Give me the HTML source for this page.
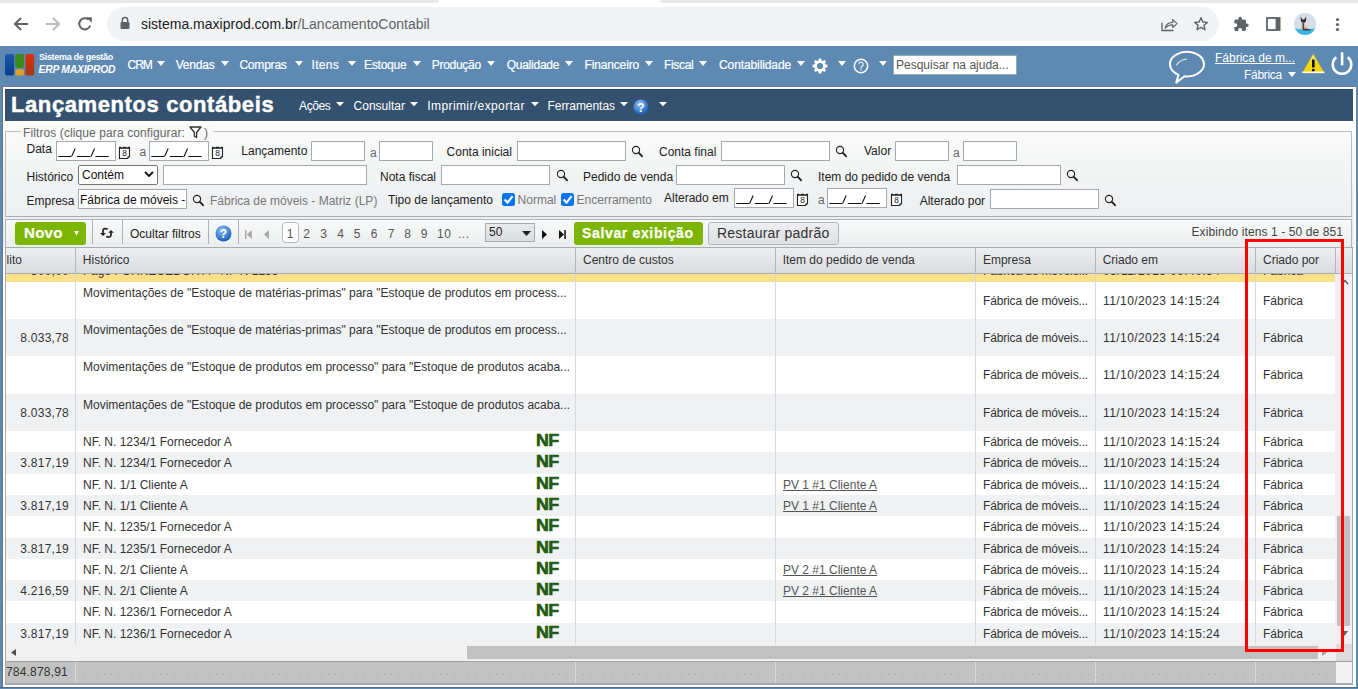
<!DOCTYPE html>
<html><head><meta charset="utf-8"><title>Lançamentos contábeis</title>
<style>
html,body{margin:0;padding:0;}
body{width:1358px;height:689px;overflow:hidden;position:relative;font-family:'Liberation Sans', sans-serif;background:#fff;}
.r{position:absolute;}
.t{position:absolute;white-space:nowrap;line-height:1;}
svg.r{overflow:visible}
</style></head><body>
<div class="r" style="left:0px;top:0px;width:1358px;height:46px;background:#fff"></div>
<div class="r" style="left:0px;top:0px;width:439px;height:3px;background:#e6e8eb;border-bottom-right-radius:4px"></div>
<div class="r" style="left:660px;top:0px;width:698px;height:3px;background:#e6e8eb;border-bottom-left-radius:4px"></div>
<div class="r" style="left:107px;top:7px;width:1112px;height:34px;background:#f1f3f4;border-radius:17px"></div>
<svg class="r" style="left:13px;top:16px" width="16" height="16" viewBox="0 0 16 16"><path d="M15 8H2.5M8 2L2 8l6 6" stroke="#5f6368" stroke-width="2" fill="none"/></svg>
<svg class="r" style="left:45px;top:16px" width="16" height="16" viewBox="0 0 16 16"><path d="M1 8h12.5M8 2l6 6-6 6" stroke="#b9bbbe" stroke-width="2" fill="none"/></svg>
<svg class="r" style="left:77px;top:16px" width="16" height="16" viewBox="0 0 16 16"><path d="M13.2 9.5A5.6 5.6 0 1 1 11.6 3.6" stroke="#5f6368" stroke-width="2" fill="none"/><path d="M9.2 1.2h5.6v5.6z" fill="#5f6368"/></svg>
<svg class="r" style="left:120px;top:16px" width="10" height="14" viewBox="0 0 10 14"><path d="M2.3 6V4.2a2.7 2.7 0 0 1 5.4 0V6" stroke="#5f6368" stroke-width="1.5" fill="none"/><rect x="0.5" y="6" width="9" height="7" rx="1" fill="#5f6368"/></svg>
<div class="t" style="left:141px;top:16.95px;font-size:14px;color:#202124">sistema.maxiprod.com.br<span style="color:#5f6368">/LancamentoContabil</span></div>
<svg class="r" style="left:1161px;top:16px" width="17" height="16" viewBox="0 0 17 16"><path d="M1 6.5V14.5H12.5" stroke="#5f6368" stroke-width="1.3" fill="none"/><path d="M4.2 12.2C5 8.5 8 6.3 11.8 6.3V3.6L16 7.6 11.8 11.6V8.8C8.6 8.8 6.2 9.8 4.2 12.2Z" stroke="#5f6368" stroke-width="1.2" fill="none" stroke-linejoin="round"/></svg>
<svg class="r" style="left:1193px;top:16px" width="16" height="16" viewBox="0 0 16 16"><path d="M8 1.8l1.85 4.15 4.5.4-3.4 2.95 1.05 4.45L8 11.4l-4 2.35 1.05-4.45-3.4-2.95 4.5-.4z" stroke="#5f6368" stroke-width="1.4" fill="none" stroke-linejoin="round"/></svg>
<svg class="r" style="left:1233px;top:16px" width="16" height="16" viewBox="0 0 16 16"><path transform="scale(0.68)" d="M20.5 11H19V7c0-1.1-.9-2-2-2h-4V3.5C13 2.12 11.88 1 10.5 1S8 2.12 8 3.5V5H4c-1.1 0-1.99.9-1.99 2v3.8H3.5c1.49 0 2.7 1.21 2.7 2.7s-1.21 2.7-2.7 2.7H2V20c0 1.1.9 2 2 2h3.8v-1.5c0-1.490 1.21-2.7 2.7-2.7 1.49 0 2.7 1.21 2.7 2.7V22H17c1.1 0 2-.9 2-2v-4h1.5c1.38 0 2.5-1.12 2.5-2.5S21.880 11 20.5 11z" fill="#5f6368"/></svg>
<svg class="r" style="left:1266px;top:17px" width="15" height="14" viewBox="0 0 15 14"><rect x="1" y="1" width="12.6" height="12" stroke="#5f6368" stroke-width="1.8" fill="none"/><rect x="9.6" y="1" width="4" height="12" fill="#5f6368"/></svg>
<svg class="r" style="left:1294px;top:13px" width="22" height="22" viewBox="0 0 22 22"><defs><clipPath id="av"><circle cx="11" cy="11" r="11"/></clipPath></defs><g clip-path="url(#av)"><rect width="22" height="22" fill="#d2deea"/><path d="M0 15.5Q11 17 22 15.5V22H0z" fill="#3db6e6"/><path d="M6.5 3.5L8.3 6.5H10.3L12.2 3.5L12 8.5L10.5 10.5L10.8 13L13.5 14.5L15.5 17H7.5L8 12.5L7.2 9.5Z" fill="#d9b38a"/><path d="M6.5 3.5L8.3 6.5H10.3L12.2 3.5L12 8L10.8 9.5H8L7 8Z" fill="#2a2a2a"/><rect x="8.6" y="10" width="1.4" height="7" fill="#55443a"/><path d="M10 15.5L17 16.5L16 17.5H9z" fill="#2a3a55"/></g></svg>
<svg class="r" style="left:1335px;top:16px" width="5" height="16" viewBox="0 0 5 16"><circle cx="2.5" cy="3.5" r="1.6" fill="#5f6368"/><circle cx="2.5" cy="8.5" r="1.6" fill="#5f6368"/><circle cx="2.5" cy="13.5" r="1.6" fill="#5f6368"/></svg>
<div class="r" style="left:0px;top:46px;width:1358px;height:643px;background:#5d89b3"></div>
<svg class="r" style="left:5px;top:54px" width="30" height="22" viewBox="0 0 30 22"><defs><linearGradient id="lb" x1="0" y1="0" x2="0" y2="1"><stop offset="0" stop-color="#1c5aaa"/><stop offset="1" stop-color="#0b3c8c"/></linearGradient><linearGradient id="lr" x1="0" y1="0" x2="0" y2="1"><stop offset="0" stop-color="#d8300c"/><stop offset="1" stop-color="#a8380c"/></linearGradient></defs><rect x="0" y="0" width="9.2" height="21.6" rx="2" fill="url(#lb)"/><rect x="10.2" y="0" width="8.8" height="14" rx="2" fill="#3a8a1c"/><rect x="10.2" y="15.2" width="8.8" height="6.4" rx="2" fill="#e2a028"/><rect x="20.4" y="0" width="8.8" height="21.6" rx="2" fill="url(#lr)"/></svg>
<div class="t " style="left:39px;top:53.38px;font-size:9px;color:#fff;font-weight:700;letter-spacing:-0.3px">Sistema de gestão</div>
<div class="t " style="left:38.5px;top:64.98px;font-size:10.3px;color:#fff;font-weight:700;font-style:italic;letter-spacing:-0.2px">ERP MAXIPROD</div>
<div class="t " style="left:127.5px;top:58.84px;font-size:12px;color:#fff;font-weight:400;letter-spacing:-1.0px;-webkit-text-stroke:0.2px #fff">CRM</div>
<svg class="r" style="left:157px;top:61px" width="8" height="5" viewBox="0 0 8 5"><path d="M0 0H8L4.0 5Z" fill="#fff"/></svg>
<div class="t " style="left:175.7px;top:58.84px;font-size:12px;color:#fff;font-weight:400;letter-spacing:-0.2px;-webkit-text-stroke:0.2px #fff">Vendas</div>
<svg class="r" style="left:220.5px;top:61px" width="8" height="5" viewBox="0 0 8 5"><path d="M0 0H8L4.0 5Z" fill="#fff"/></svg>
<div class="t " style="left:239.4px;top:58.84px;font-size:12px;color:#fff;font-weight:400;letter-spacing:-0.2px;-webkit-text-stroke:0.2px #fff">Compras</div>
<svg class="r" style="left:295px;top:61px" width="8" height="5" viewBox="0 0 8 5"><path d="M0 0H8L4.0 5Z" fill="#fff"/></svg>
<div class="t " style="left:311.5px;top:58.84px;font-size:12px;color:#fff;font-weight:400;letter-spacing:0.3px;-webkit-text-stroke:0.2px #fff">Itens</div>
<svg class="r" style="left:348px;top:61px" width="8" height="5" viewBox="0 0 8 5"><path d="M0 0H8L4.0 5Z" fill="#fff"/></svg>
<div class="t " style="left:363.9px;top:58.84px;font-size:12px;color:#fff;font-weight:400;letter-spacing:-0.2px;-webkit-text-stroke:0.2px #fff">Estoque</div>
<svg class="r" style="left:413px;top:61px" width="8" height="5" viewBox="0 0 8 5"><path d="M0 0H8L4.0 5Z" fill="#fff"/></svg>
<div class="t " style="left:431.8px;top:58.84px;font-size:12px;color:#fff;font-weight:400;letter-spacing:-0.3px;-webkit-text-stroke:0.2px #fff">Produção</div>
<svg class="r" style="left:487px;top:61px" width="8" height="5" viewBox="0 0 8 5"><path d="M0 0H8L4.0 5Z" fill="#fff"/></svg>
<div class="t " style="left:506.7px;top:58.84px;font-size:12px;color:#fff;font-weight:400;letter-spacing:-0.25px;-webkit-text-stroke:0.2px #fff">Qualidade</div>
<svg class="r" style="left:565px;top:61px" width="8" height="5" viewBox="0 0 8 5"><path d="M0 0H8L4.0 5Z" fill="#fff"/></svg>
<div class="t " style="left:584.5px;top:58.84px;font-size:12px;color:#fff;font-weight:400;letter-spacing:-0.15px;-webkit-text-stroke:0.2px #fff">Financeiro</div>
<svg class="r" style="left:645px;top:61px" width="8" height="5" viewBox="0 0 8 5"><path d="M0 0H8L4.0 5Z" fill="#fff"/></svg>
<div class="t " style="left:663.9px;top:58.84px;font-size:12px;color:#fff;font-weight:400;letter-spacing:-0.3px;-webkit-text-stroke:0.2px #fff">Fiscal</div>
<svg class="r" style="left:699px;top:61px" width="8" height="5" viewBox="0 0 8 5"><path d="M0 0H8L4.0 5Z" fill="#fff"/></svg>
<div class="t " style="left:719px;top:58.84px;font-size:12px;color:#fff;font-weight:400;letter-spacing:-0.1px;-webkit-text-stroke:0.2px #fff">Contabilidade</div>
<svg class="r" style="left:797px;top:61px" width="8" height="5" viewBox="0 0 8 5"><path d="M0 0H8L4.0 5Z" fill="#fff"/></svg>
<svg class="r" style="left:812px;top:58px" width="16" height="16" viewBox="0 0 16 16"><g fill="#fff"><circle cx="8" cy="8" r="5.6"/><path d="M6.8 0.6H9.2L9.9 4H6.1Z" transform="rotate(0 8 8)"/><path d="M6.8 0.6H9.2L9.9 4H6.1Z" transform="rotate(45 8 8)"/><path d="M6.8 0.6H9.2L9.9 4H6.1Z" transform="rotate(90 8 8)"/><path d="M6.8 0.6H9.2L9.9 4H6.1Z" transform="rotate(135 8 8)"/><path d="M6.8 0.6H9.2L9.9 4H6.1Z" transform="rotate(180 8 8)"/><path d="M6.8 0.6H9.2L9.9 4H6.1Z" transform="rotate(225 8 8)"/><path d="M6.8 0.6H9.2L9.9 4H6.1Z" transform="rotate(270 8 8)"/><path d="M6.8 0.6H9.2L9.9 4H6.1Z" transform="rotate(315 8 8)"/></g><circle cx="8" cy="8" r="3.1" fill="#5d89b3"/></svg>
<svg class="r" style="left:838px;top:61px" width="8" height="5" viewBox="0 0 8 5"><path d="M0 0H8L4.0 5Z" fill="#fff"/></svg>
<svg class="r" style="left:853px;top:58px" width="16" height="16" viewBox="0 0 16 16"><circle cx="8" cy="8" r="6.7" stroke="#fff" stroke-width="1.5" fill="none"/><path d="M5.8 6.2a2.2 2.2 0 1 1 3.2 2c-.7.4-1 .8-1 1.6v.6" stroke="#fff" stroke-width="1.1" fill="none"/><rect x="7.4" y="11.3" width="1.2" height="1.2" fill="#fff"/></svg>
<svg class="r" style="left:879px;top:61px" width="8" height="5" viewBox="0 0 8 5"><path d="M0 0H8L4.0 5Z" fill="#fff"/></svg>
<div class="r" style="left:893px;top:55px;width:124px;height:20px;background:#fff;border:1px solid #9aa;box-sizing:border-box"></div>
<div class="t " style="left:896px;top:58.84px;font-size:12px;color:#555;font-weight:400;">Pesquisar na ajuda...</div>
<svg class="r" style="left:1169px;top:51px" width="38" height="34" viewBox="0 0 38 34"><path d="M9.5 23.8A17 12.3 0 1 1 15.5 25.3L7.2 31.6Z" stroke="#fff" stroke-width="2" fill="none" stroke-linejoin="round"/><path d="M7.5 14.5C9 11 13 8.5 18 8" stroke="#e8eef5" stroke-width="1.1" fill="none"/></svg>
<div class="t " style="left:1215px;top:51.84px;font-size:12px;color:#fff;font-weight:400;text-decoration:underline">Fábrica de m...</div>
<div class="t " style="left:1244px;top:68.84px;font-size:12px;color:#fff;font-weight:400;letter-spacing:-0.3px">Fábrica</div>
<svg class="r" style="left:1288px;top:72px" width="8" height="5" viewBox="0 0 8 5"><path d="M0 0H8L4.0 5Z" fill="#fff"/></svg>
<svg class="r" style="left:1301px;top:52px" width="25" height="23" viewBox="0 0 25 23"><defs><linearGradient id="wg" x1="0" y1="0" x2="0" y2="1"><stop offset="0" stop-color="#f7e9a0"/><stop offset="0.45" stop-color="#f2dc10"/><stop offset="1" stop-color="#eed600"/></linearGradient></defs><path d="M12.2 1.2L23.8 21.2H0.8z" fill="url(#wg)" stroke="#8c8c80" stroke-width="1" stroke-linejoin="round"/><rect x="11" y="7.5" width="2.6" height="8" fill="#111"/><rect x="11" y="17" width="2.6" height="2.5" fill="#111"/><rect x="1" y="19.5" width="22.5" height="1.6" fill="#f4f4f0"/></svg>
<svg class="r" style="left:1331px;top:52px" width="23" height="24" viewBox="0 0 23 24"><path d="M5.3 5.2A9.3 9.3 0 1 0 16.7 5.2" stroke="#fff" stroke-width="2.5" fill="none"/><path d="M11.1 1.2v11" stroke="#fff" stroke-width="2.6" stroke-linecap="round"/></svg>
<div class="r" style="left:2px;top:86px;width:1354px;height:601px;background:#fff;border-top:1px solid #7a7a7a;border-left:1px solid #6a7480;box-sizing:border-box"></div>
<div class="r" style="left:5px;top:89px;width:1348px;height:32px;background:#34516f;border-top:1px solid #244568;box-sizing:border-box"></div>
<div class="t " style="left:11px;top:93.58px;font-size:22px;color:#fff;font-weight:700;letter-spacing:0.6px;-webkit-text-stroke:0.45px #fff">Lançamentos contábeis</div>
<div class="t " style="left:299.1px;top:99.84px;font-size:12px;color:#fff;font-weight:400;letter-spacing:-0.4px">Ações</div>
<svg class="r" style="left:336px;top:102px" width="8" height="4.2" viewBox="0 0 8 4.2"><path d="M0 0H8L4.0 4.2Z" fill="#fff"/></svg>
<div class="t " style="left:353.6px;top:99.84px;font-size:12px;color:#fff;font-weight:400;letter-spacing:0px">Consultar</div>
<svg class="r" style="left:410px;top:102px" width="8" height="4.2" viewBox="0 0 8 4.2"><path d="M0 0H8L4.0 4.2Z" fill="#fff"/></svg>
<div class="t " style="left:427.3px;top:99.84px;font-size:12px;color:#fff;font-weight:400;letter-spacing:0.4px">Imprimir/exportar</div>
<svg class="r" style="left:531px;top:102px" width="8" height="4.2" viewBox="0 0 8 4.2"><path d="M0 0H8L4.0 4.2Z" fill="#fff"/></svg>
<div class="t " style="left:547.5px;top:99.84px;font-size:12px;color:#fff;font-weight:400;letter-spacing:-0.05px">Ferramentas</div>
<svg class="r" style="left:620px;top:102px" width="8" height="4.2" viewBox="0 0 8 4.2"><path d="M0 0H8L4.0 4.2Z" fill="#fff"/></svg>
<svg class="r" style="left:633px;top:99px" width="16" height="16" viewBox="0 0 16 16"><defs><radialGradient id="hg" cx="40%" cy="30%" r="70%"><stop offset="0" stop-color="#8ec0f5"/><stop offset="1" stop-color="#1c5fb8"/></radialGradient></defs><circle cx="8" cy="8" r="7.5" fill="url(#hg)"/><text x="8" y="12.5" font-size="12" font-family="Liberation Sans" font-weight="700" fill="#fff" text-anchor="middle">?</text></svg>
<svg class="r" style="left:659px;top:101.5px" width="8" height="4.2" viewBox="0 0 8 4.2"><path d="M0 0H8L4.0 4.2Z" fill="#fff"/></svg>
<div class="r" style="left:3px;top:121px;width:1351px;height:127px;background:linear-gradient(#fdfdfd 0px,#f6f7f7 30px,#eceef0 96px,#eceef0 100%)"></div>
<div class="r" style="left:5px;top:131px;width:1347px;height:86px;border:1px solid #b8bec6;border-bottom-color:#a9aeb4;box-sizing:border-box"></div>
<div class="r" style="left:21px;top:126px;width:192px;height:12px;background:#f8f9f9"></div>
<div class="t " style="left:23px;top:127.14px;font-size:12px;color:#666;font-weight:400;letter-spacing:0.1px">Filtros (clique para configurar:</div>
<svg class="r" style="left:189px;top:126px" width="13" height="12" viewBox="0 0 13 12"><path d="M1 1h11L7.6 6.5V11.5L5.4 10.5V6.5z" stroke="#333" stroke-width="1.3" fill="none" stroke-linejoin="round"/></svg>
<div class="t " style="left:204px;top:127.14px;font-size:12px;color:#666;font-weight:400;">)</div>
<div class="t " style="left:26.5px;top:142.84px;font-size:12px;color:#222;font-weight:400;">Data</div>
<div class="r" style="left:56px;top:141px;width:60px;height:20px;background:#fff;border:1px solid #a5a9ae;box-sizing:border-box"></div>
<svg class="r" style="left:56px;top:142px" width="60" height="19" viewBox="0 0 60 19"><path d="M2.3 14.5H15.3M20.9 14.5H34.5M39.4 14.5H52.7" stroke="#111" stroke-width="1"/><path d="M15.6 14.5L19.2 6.5M35 14.5L38.6 6.5" stroke="#111" stroke-width="1.1"/></svg>
<svg class="r" style="left:118px;top:145px" width="13" height="14" viewBox="0 0 13 14"><path d="M1.5 2.5h10v9l-2 2h-8z" stroke="#222" stroke-width="1.1" fill="#fff"/><rect x="1" y="1.8" width="11" height="2" fill="#222"/><circle cx="4" cy="1.6" r="0.9" fill="#fff"/><circle cx="9" cy="1.6" r="0.9" fill="#fff"/><path d="M9.5 13.5l2-2h-2z" fill="#222"/><text x="6.5" y="11.3" font-size="8.5" font-family="Liberation Mono" fill="#222" text-anchor="middle">8</text></svg>
<div class="t " style="left:139.5px;top:145.84px;font-size:12px;color:#666;font-weight:400;">a</div>
<div class="r" style="left:149px;top:141px;width:60px;height:20px;background:#fff;border:1px solid #a5a9ae;box-sizing:border-box"></div>
<svg class="r" style="left:149px;top:142px" width="60" height="19" viewBox="0 0 60 19"><path d="M2.3 14.5H15.3M20.9 14.5H34.5M39.4 14.5H52.7" stroke="#111" stroke-width="1"/><path d="M15.6 14.5L19.2 6.5M35 14.5L38.6 6.5" stroke="#111" stroke-width="1.1"/></svg>
<svg class="r" style="left:211px;top:145px" width="13" height="14" viewBox="0 0 13 14"><path d="M1.5 2.5h10v9l-2 2h-8z" stroke="#222" stroke-width="1.1" fill="#fff"/><rect x="1" y="1.8" width="11" height="2" fill="#222"/><circle cx="4" cy="1.6" r="0.9" fill="#fff"/><circle cx="9" cy="1.6" r="0.9" fill="#fff"/><path d="M9.5 13.5l2-2h-2z" fill="#222"/><text x="6.5" y="11.3" font-size="8.5" font-family="Liberation Mono" fill="#222" text-anchor="middle">8</text></svg>
<div class="t " style="left:241.3px;top:145.34px;font-size:12px;color:#222;font-weight:400;">Lançamento</div>
<div class="r" style="left:311px;top:141px;width:54px;height:20px;background:#fff;border:1px solid #a5a9ae;box-sizing:border-box"></div>
<div class="t " style="left:370px;top:146.84px;font-size:12px;color:#666;font-weight:400;">a</div>
<div class="r" style="left:379px;top:141px;width:54px;height:20px;background:#fff;border:1px solid #a5a9ae;box-sizing:border-box"></div>
<div class="t " style="left:446.6px;top:145.84px;font-size:12px;color:#222;font-weight:400;">Conta inicial</div>
<div class="r" style="left:517px;top:141px;width:109px;height:20px;background:#fff;border:1px solid #a5a9ae;box-sizing:border-box"></div>
<svg class="r" style="left:631px;top:145px" width="13" height="13" viewBox="0 0 13 13"><circle cx="5" cy="5" r="3.6" stroke="#222" stroke-width="1.15" fill="none"/><path d="M7.8 7.8l3.2 3.4" stroke="#222" stroke-width="1.9" stroke-linecap="round"/></svg>
<div class="t " style="left:659px;top:145.84px;font-size:12px;color:#222;font-weight:400;">Conta final</div>
<div class="r" style="left:721px;top:141px;width:109px;height:20px;background:#fff;border:1px solid #a5a9ae;box-sizing:border-box"></div>
<svg class="r" style="left:835px;top:145px" width="13" height="13" viewBox="0 0 13 13"><circle cx="5" cy="5" r="3.6" stroke="#222" stroke-width="1.15" fill="none"/><path d="M7.8 7.8l3.2 3.4" stroke="#222" stroke-width="1.9" stroke-linecap="round"/></svg>
<div class="t " style="left:864px;top:144.84px;font-size:12px;color:#222;font-weight:400;">Valor</div>
<div class="r" style="left:895px;top:141px;width:54px;height:20px;background:#fff;border:1px solid #a5a9ae;box-sizing:border-box"></div>
<div class="t " style="left:953px;top:146.84px;font-size:12px;color:#666;font-weight:400;">a</div>
<div class="r" style="left:963px;top:141px;width:54px;height:20px;background:#fff;border:1px solid #a5a9ae;box-sizing:border-box"></div>
<div class="t " style="left:26.5px;top:170.84px;font-size:12px;color:#222;font-weight:400;">Histórico</div>
<div class="r" style="left:78px;top:165px;width:80px;height:20px;background:#fff;border:1px solid #767676;border-radius:2px;box-sizing:border-box"></div>
<div class="t " style="left:82px;top:169.34px;font-size:12px;color:#111;font-weight:400;">Contém</div>
<svg class="r" style="left:144px;top:171px" width="10" height="7" viewBox="0 0 10 7"><path d="M1 1l4 4 4-4" stroke="#111" stroke-width="1.8" fill="none"/></svg>
<div class="r" style="left:163px;top:165px;width:204px;height:20px;background:#fff;border:1px solid #a5a9ae;box-sizing:border-box"></div>
<div class="t " style="left:380px;top:170.84px;font-size:12px;color:#222;font-weight:400;">Nota fiscal</div>
<div class="r" style="left:441px;top:165px;width:109px;height:20px;background:#fff;border:1px solid #a5a9ae;box-sizing:border-box"></div>
<svg class="r" style="left:556px;top:169px" width="13" height="13" viewBox="0 0 13 13"><circle cx="5" cy="5" r="3.6" stroke="#222" stroke-width="1.15" fill="none"/><path d="M7.8 7.8l3.2 3.4" stroke="#222" stroke-width="1.9" stroke-linecap="round"/></svg>
<div class="t " style="left:583px;top:170.84px;font-size:12px;color:#222;font-weight:400;">Pedido de venda</div>
<div class="r" style="left:676px;top:165px;width:109px;height:20px;background:#fff;border:1px solid #a5a9ae;box-sizing:border-box"></div>
<svg class="r" style="left:790px;top:169px" width="13" height="13" viewBox="0 0 13 13"><circle cx="5" cy="5" r="3.6" stroke="#222" stroke-width="1.15" fill="none"/><path d="M7.8 7.8l3.2 3.4" stroke="#222" stroke-width="1.9" stroke-linecap="round"/></svg>
<div class="t " style="left:818px;top:170.84px;font-size:12px;color:#222;font-weight:400;">Item do pedido de venda</div>
<div class="r" style="left:957px;top:165px;width:104px;height:20px;background:#fff;border:1px solid #a5a9ae;box-sizing:border-box"></div>
<svg class="r" style="left:1066px;top:169px" width="13" height="13" viewBox="0 0 13 13"><circle cx="5" cy="5" r="3.6" stroke="#222" stroke-width="1.15" fill="none"/><path d="M7.8 7.8l3.2 3.4" stroke="#222" stroke-width="1.9" stroke-linecap="round"/></svg>
<div class="t " style="left:26.5px;top:195.14px;font-size:12px;color:#222;font-weight:400;">Empresa</div>
<div class="r" style="left:78px;top:189px;width:109px;height:20px;background:#fff;border:1px solid #a5a9ae;box-sizing:border-box"></div>
<div class="t " style="left:80px;top:193.54px;font-size:12px;color:#111;font-weight:400;">Fábrica de móveis -</div>
<svg class="r" style="left:192px;top:194px" width="13" height="13" viewBox="0 0 13 13"><circle cx="5" cy="5" r="3.6" stroke="#222" stroke-width="1.15" fill="none"/><path d="M7.8 7.8l3.2 3.4" stroke="#222" stroke-width="1.9" stroke-linecap="round"/></svg>
<div class="t " style="left:210px;top:194.84px;font-size:12px;color:#777;font-weight:400;">Fábrica de móveis - Matriz (LP)</div>
<div class="t " style="left:388px;top:193.84px;font-size:12px;color:#222;font-weight:400;">Tipo de lançamento</div>
<svg class="r" style="left:502px;top:193px" width="13" height="13" viewBox="0 0 13 13"><rect x="0" y="0" width="13" height="13" rx="2.5" fill="#0a75f0"/><path d="M2.6 6.6l2.9 3L10.6 3.2" stroke="#fff" stroke-width="2.1" fill="none"/></svg>
<div class="t " style="left:517.6px;top:193.84px;font-size:12px;color:#777;font-weight:400;">Normal</div>
<svg class="r" style="left:561px;top:193px" width="13" height="13" viewBox="0 0 13 13"><rect x="0" y="0" width="13" height="13" rx="2.5" fill="#0a75f0"/><path d="M2.6 6.6l2.9 3L10.6 3.2" stroke="#fff" stroke-width="2.1" fill="none"/></svg>
<div class="t " style="left:576.6px;top:193.84px;font-size:12px;color:#777;font-weight:400;">Encerramento</div>
<div class="t " style="left:664px;top:191.84px;font-size:12px;color:#222;font-weight:400;">Alterado em</div>
<div class="r" style="left:734px;top:188px;width:60px;height:20px;background:#fff;border:1px solid #a5a9ae;box-sizing:border-box"></div>
<svg class="r" style="left:734px;top:189px" width="60" height="19" viewBox="0 0 60 19"><path d="M2.3 14.5H15.3M20.9 14.5H34.5M39.4 14.5H52.7" stroke="#111" stroke-width="1"/><path d="M15.6 14.5L19.2 6.5M35 14.5L38.6 6.5" stroke="#111" stroke-width="1.1"/></svg>
<svg class="r" style="left:796px;top:192px" width="13" height="14" viewBox="0 0 13 14"><path d="M1.5 2.5h10v9l-2 2h-8z" stroke="#222" stroke-width="1.1" fill="#fff"/><rect x="1" y="1.8" width="11" height="2" fill="#222"/><circle cx="4" cy="1.6" r="0.9" fill="#fff"/><circle cx="9" cy="1.6" r="0.9" fill="#fff"/><path d="M9.5 13.5l2-2h-2z" fill="#222"/><text x="6.5" y="11.3" font-size="8.5" font-family="Liberation Mono" fill="#222" text-anchor="middle">8</text></svg>
<div class="t " style="left:818px;top:193.84px;font-size:12px;color:#666;font-weight:400;">a</div>
<div class="r" style="left:827px;top:188px;width:60px;height:20px;background:#fff;border:1px solid #a5a9ae;box-sizing:border-box"></div>
<svg class="r" style="left:827px;top:189px" width="60" height="19" viewBox="0 0 60 19"><path d="M2.3 14.5H15.3M20.9 14.5H34.5M39.4 14.5H52.7" stroke="#111" stroke-width="1"/><path d="M15.6 14.5L19.2 6.5M35 14.5L38.6 6.5" stroke="#111" stroke-width="1.1"/></svg>
<svg class="r" style="left:890px;top:192px" width="13" height="14" viewBox="0 0 13 14"><path d="M1.5 2.5h10v9l-2 2h-8z" stroke="#222" stroke-width="1.1" fill="#fff"/><rect x="1" y="1.8" width="11" height="2" fill="#222"/><circle cx="4" cy="1.6" r="0.9" fill="#fff"/><circle cx="9" cy="1.6" r="0.9" fill="#fff"/><path d="M9.5 13.5l2-2h-2z" fill="#222"/><text x="6.5" y="11.3" font-size="8.5" font-family="Liberation Mono" fill="#222" text-anchor="middle">8</text></svg>
<div class="t " style="left:919.7px;top:194.84px;font-size:12px;color:#222;font-weight:400;">Alterado por</div>
<div class="r" style="left:990px;top:189px;width:109px;height:20px;background:#fff;border:1px solid #a5a9ae;box-sizing:border-box"></div>
<svg class="r" style="left:1104px;top:194px" width="13" height="13" viewBox="0 0 13 13"><circle cx="5" cy="5" r="3.6" stroke="#222" stroke-width="1.15" fill="none"/><path d="M7.8 7.8l3.2 3.4" stroke="#222" stroke-width="1.9" stroke-linecap="round"/></svg>
<div class="r" style="left:5px;top:219px;width:1347px;height:29px;background:linear-gradient(#f8f9f9,#ebeced);border:1px solid #b1b6bc;border-bottom:none;box-sizing:border-box"></div>
<div class="r" style="left:15px;top:222px;width:71px;height:23px;background:#7cb600;border-radius:3px"></div>
<div class="t " style="left:24px;top:225.30px;font-size:15px;color:#fff;font-weight:700;letter-spacing:0.3px;-webkit-text-stroke:0.2px #fff">Novo</div>
<svg class="r" style="left:74px;top:231px" width="5" height="5" viewBox="0 0 5 5"><path d="M0 0h5L2.5 4.5z" fill="#fff"/></svg>
<div class="r" style="left:92px;top:220px;width:1px;height:24px;background:#a9b1bb"></div>
<div class="r" style="left:122px;top:220px;width:1px;height:24px;background:#a9b1bb"></div>
<div class="r" style="left:208px;top:220px;width:1px;height:24px;background:#a9b1bb"></div>
<div class="r" style="left:238px;top:220px;width:1px;height:24px;background:#a9b1bb"></div>
<svg class="r" style="left:99px;top:226px" width="16" height="14" viewBox="0 0 16 14"><path d="M8.7 3.2C6.5 2.2 4 2.3 4 4.5V8" stroke="#222" stroke-width="1.7" fill="none"/><path d="M1 7H7L4 10Z" fill="#222"/><path d="M7.3 10.5C9.5 11.5 12 11.2 12 9V6" stroke="#222" stroke-width="1.7" fill="none"/><path d="M9.2 6.7H14.9L12 3.9Z" fill="#222"/></svg>
<div class="t " style="left:130px;top:227.84px;font-size:12px;color:#222;font-weight:400;">Ocultar filtros</div>
<svg class="r" style="left:215px;top:225px" width="17" height="17" viewBox="0 0 17 17"><defs><radialGradient id="hg2" cx="40%" cy="30%" r="70%"><stop offset="0" stop-color="#8ec0f5"/><stop offset="1" stop-color="#1c5fb8"/></radialGradient></defs><circle cx="8.5" cy="8.5" r="8" fill="url(#hg2)"/><text x="8.5" y="13" font-size="12" font-family="Liberation Sans" font-weight="700" fill="#fff" text-anchor="middle">?</text></svg>
<svg class="r" style="left:245px;top:229.5px" width="7" height="9" viewBox="0 0 7 9"><rect x="0" y="0" width="1.5" height="9" fill="#aaa"/><path d="M6.8 0v9L1.8 4.5z" fill="#aaa"/></svg>
<svg class="r" style="left:264px;top:229.5px" width="5" height="9" viewBox="0 0 5 9"><path d="M5 0v9L0 4.5z" fill="#aaa"/></svg>
<div class="r" style="left:282px;top:222px;width:17px;height:21px;background:#fff;border:1px solid #b5b8bd;border-radius:4px;box-sizing:border-box"></div>
<div class="t" style="left:280px;width:20px;text-align:center;top:228.14px;font-size:12px;color:#555">1</div>
<div class="t" style="left:296.5px;width:20px;text-align:center;top:228.14px;font-size:12px;color:#555">2</div>
<div class="t" style="left:313.6px;width:20px;text-align:center;top:228.14px;font-size:12px;color:#555">3</div>
<div class="t" style="left:330.6px;width:20px;text-align:center;top:228.14px;font-size:12px;color:#555">4</div>
<div class="t" style="left:347px;width:20px;text-align:center;top:228.14px;font-size:12px;color:#555">5</div>
<div class="t" style="left:364px;width:20px;text-align:center;top:228.14px;font-size:12px;color:#555">6</div>
<div class="t" style="left:381px;width:20px;text-align:center;top:228.14px;font-size:12px;color:#555">7</div>
<div class="t" style="left:397.6px;width:20px;text-align:center;top:228.14px;font-size:12px;color:#555">8</div>
<div class="t" style="left:414px;width:20px;text-align:center;top:228.14px;font-size:12px;color:#555">9</div>
<div class="t " style="left:437px;top:228.14px;font-size:12px;color:#555;font-weight:400;letter-spacing:0.5px">10</div>
<div class="t " style="left:458px;top:228.14px;font-size:12px;color:#555;font-weight:400;letter-spacing:0.5px">...</div>
<div class="r" style="left:485px;top:223px;width:50px;height:19px;background:linear-gradient(#e8e9eb,#dcdde0);border:1px solid #a9acb1;box-sizing:border-box"></div>
<div class="t " style="left:489px;top:226.34px;font-size:12px;color:#222;font-weight:400;">50</div>
<svg class="r" style="left:522px;top:231px" width="9" height="5" viewBox="0 0 9 5"><path d="M0 0h9L4.5 5z" fill="#222"/></svg>
<svg class="r" style="left:542px;top:229.5px" width="5" height="9" viewBox="0 0 5 9"><path d="M0 0v9L5 4.5z" fill="#111"/></svg>
<svg class="r" style="left:558.5px;top:229.5px" width="7" height="9" viewBox="0 0 7 9"><path d="M0 0v9L5 4.5z" fill="#111"/><rect x="5.3" y="0" width="1.5" height="9" fill="#111"/></svg>
<div class="r" style="left:574px;top:222px;width:129px;height:23px;background:#7cb600;border-radius:3px"></div>
<div class="t " style="left:582px;top:225.75px;font-size:14px;color:#fff;font-weight:700;letter-spacing:0.65px;-webkit-text-stroke:0.25px #fff">Salvar exibição</div>
<div class="r" style="left:708px;top:222px;width:131px;height:23px;background:linear-gradient(#eceef0,#dfe1e4);border:1px solid #b3b6bb;border-radius:3px;box-sizing:border-box"></div>
<div class="t " style="left:717px;top:225.75px;font-size:14px;color:#333;font-weight:400;letter-spacing:0.22px">Restaurar padrão</div>
<div class="t " style="right:15px;top:226.34px;font-size:12px;color:#444;font-weight:400;letter-spacing:0.1px">Exibindo itens 1 - 50 de 851</div>
<div class="r" style="left:5px;top:247px;width:1348px;height:438px;border:1px solid #a4aab2;box-sizing:border-box;background:#f0f0f0"></div>
<div class="r" style="left:6px;top:247px;width:1346px;height:27px;background:linear-gradient(#eeeff1,#d9dbdf);border-top:1px solid #a9aeb4;border-bottom:1px solid #a9aeb4;box-sizing:border-box"></div>
<div class="r" style="left:75px;top:248px;width:1px;height:26px;background:#b3b8be"></div>
<div class="r" style="left:575px;top:248px;width:1px;height:26px;background:#b3b8be"></div>
<div class="r" style="left:775px;top:248px;width:1px;height:26px;background:#b3b8be"></div>
<div class="r" style="left:975px;top:248px;width:1px;height:26px;background:#b3b8be"></div>
<div class="r" style="left:1095px;top:248px;width:1px;height:26px;background:#b3b8be"></div>
<div class="r" style="left:1255px;top:248px;width:1px;height:26px;background:#b3b8be"></div>
<div class="r" style="left:1335px;top:248px;width:1px;height:26px;background:#b3b8be"></div>
<div class="t " style="left:6.6px;top:254.24px;font-size:12px;color:#333;font-weight:400;">lito</div>
<div class="t " style="left:82.8px;top:254.24px;font-size:12px;color:#333;font-weight:400;">Histórico</div>
<div class="t " style="left:583px;top:254.24px;font-size:12px;color:#333;font-weight:400;">Centro de custos</div>
<div class="t " style="left:782.7px;top:254.24px;font-size:12px;color:#333;font-weight:400;">Item do pedido de venda</div>
<div class="t " style="left:982.9px;top:254.24px;font-size:12px;color:#333;font-weight:400;">Empresa</div>
<div class="t " style="left:1102.7px;top:254.24px;font-size:12px;color:#333;font-weight:400;">Criado em</div>
<div class="t " style="left:1263px;top:254.24px;font-size:12px;color:#333;font-weight:400;">Criado por</div>
<div class="r" style="left:6px;top:274px;width:1330px;height:370px;overflow:hidden;background:#f0f0f0">
<div class="r" style="left:0px;top:-13px;width:1329px;height:21px;background:#fbe08a"></div>
<div class="t" style="right:1267px;top:-8.56px;font-size:12px;color:#333;letter-spacing:0.25px">300,00</div>
<div class="t " style="left:77px;top:-8.56px;font-size:12px;color:#333;font-weight:400;">Pago FORNECEDOR A - NF N 1233</div>
<div class="t " style="left:977px;top:-8.56px;font-size:12px;color:#333;font-weight:400;letter-spacing:-0.15px">Fábrica de móveis...</div>
<div class="t " style="left:1097px;top:-8.56px;font-size:12px;color:#333;font-weight:400;letter-spacing:0.42px">05/11/2023 09:40:54</div>
<div class="t " style="left:1257px;top:-8.56px;font-size:12px;color:#333;font-weight:400;">Fábrica</div>
<div class="r" style="left:0px;top:8px;width:1329px;height:37px;background:#fff"></div>
<div class="t " style="left:77px;top:12.54px;font-size:12px;color:#333;font-weight:400;">Movimentações de &quot;Estoque de matérias-primas&quot; para &quot;Estoque de produtos em process...</div>
<div class="t " style="left:977px;top:20.54px;font-size:12px;color:#333;font-weight:400;letter-spacing:-0.15px">Fábrica de móveis...</div>
<div class="t " style="left:1097px;top:20.54px;font-size:12px;color:#333;font-weight:400;letter-spacing:0.42px">11/10/2023 14:15:24</div>
<div class="t " style="left:1257px;top:20.54px;font-size:12px;color:#333;font-weight:400;">Fábrica</div>
<div class="r" style="left:0px;top:45px;width:1329px;height:37px;background:#f0f1f3"></div>
<div class="t" style="right:1267px;top:57.54px;font-size:12px;color:#333;letter-spacing:0.25px">8.033,78</div>
<div class="t " style="left:77px;top:49.54px;font-size:12px;color:#333;font-weight:400;">Movimentações de &quot;Estoque de matérias-primas&quot; para &quot;Estoque de produtos em process...</div>
<div class="t " style="left:977px;top:57.54px;font-size:12px;color:#333;font-weight:400;letter-spacing:-0.15px">Fábrica de móveis...</div>
<div class="t " style="left:1097px;top:57.54px;font-size:12px;color:#333;font-weight:400;letter-spacing:0.42px">11/10/2023 14:15:24</div>
<div class="t " style="left:1257px;top:57.54px;font-size:12px;color:#333;font-weight:400;">Fábrica</div>
<div class="r" style="left:0px;top:82px;width:1329px;height:38px;background:#fff"></div>
<div class="t " style="left:77px;top:86.54px;font-size:12px;color:#333;font-weight:400;">Movimentações de &quot;Estoque de produtos em processo&quot; para &quot;Estoque de produtos acaba...</div>
<div class="t " style="left:977px;top:95.04px;font-size:12px;color:#333;font-weight:400;letter-spacing:-0.15px">Fábrica de móveis...</div>
<div class="t " style="left:1097px;top:95.04px;font-size:12px;color:#333;font-weight:400;letter-spacing:0.42px">11/10/2023 14:15:24</div>
<div class="t " style="left:1257px;top:95.04px;font-size:12px;color:#333;font-weight:400;">Fábrica</div>
<div class="r" style="left:0px;top:120px;width:1329px;height:37px;background:#f0f1f3"></div>
<div class="t" style="right:1267px;top:132.54px;font-size:12px;color:#333;letter-spacing:0.25px">8.033,78</div>
<div class="t " style="left:77px;top:124.54px;font-size:12px;color:#333;font-weight:400;">Movimentações de &quot;Estoque de produtos em processo&quot; para &quot;Estoque de produtos acaba...</div>
<div class="t " style="left:977px;top:132.54px;font-size:12px;color:#333;font-weight:400;letter-spacing:-0.15px">Fábrica de móveis...</div>
<div class="t " style="left:1097px;top:132.54px;font-size:12px;color:#333;font-weight:400;letter-spacing:0.42px">11/10/2023 14:15:24</div>
<div class="t " style="left:1257px;top:132.54px;font-size:12px;color:#333;font-weight:400;">Fábrica</div>
<div class="r" style="left:0px;top:157px;width:1329px;height:21px;background:#fff"></div>
<div class="t " style="left:77px;top:161.54px;font-size:12px;color:#333;font-weight:400;">NF. N. 1234/1 Fornecedor A</div>
<div class="t" style="left:530px;top:157.90px;font-size:17px;line-height:17px;font-weight:700;color:#245a12;letter-spacing:-0.5px;transform:scaleX(1.05);transform-origin:left;-webkit-text-stroke:0.6px #245a12">NF</div>
<div class="t " style="left:977px;top:161.54px;font-size:12px;color:#333;font-weight:400;letter-spacing:-0.15px">Fábrica de móveis...</div>
<div class="t " style="left:1097px;top:161.54px;font-size:12px;color:#333;font-weight:400;letter-spacing:0.42px">11/10/2023 14:15:24</div>
<div class="t " style="left:1257px;top:161.54px;font-size:12px;color:#333;font-weight:400;">Fábrica</div>
<div class="r" style="left:0px;top:178px;width:1329px;height:22px;background:#f0f1f3"></div>
<div class="t" style="right:1267px;top:183.04px;font-size:12px;color:#333;letter-spacing:0.25px">3.817,19</div>
<div class="t " style="left:77px;top:183.04px;font-size:12px;color:#333;font-weight:400;">NF. N. 1234/1 Fornecedor A</div>
<div class="t" style="left:530px;top:179.40px;font-size:17px;line-height:17px;font-weight:700;color:#245a12;letter-spacing:-0.5px;transform:scaleX(1.05);transform-origin:left;-webkit-text-stroke:0.6px #245a12">NF</div>
<div class="t " style="left:977px;top:183.04px;font-size:12px;color:#333;font-weight:400;letter-spacing:-0.15px">Fábrica de móveis...</div>
<div class="t " style="left:1097px;top:183.04px;font-size:12px;color:#333;font-weight:400;letter-spacing:0.42px">11/10/2023 14:15:24</div>
<div class="t " style="left:1257px;top:183.04px;font-size:12px;color:#333;font-weight:400;">Fábrica</div>
<div class="r" style="left:0px;top:200px;width:1329px;height:21px;background:#fff"></div>
<div class="t " style="left:77px;top:204.54px;font-size:12px;color:#333;font-weight:400;">NF. N. 1/1 Cliente A</div>
<div class="t" style="left:530px;top:200.90px;font-size:17px;line-height:17px;font-weight:700;color:#245a12;letter-spacing:-0.5px;transform:scaleX(1.05);transform-origin:left;-webkit-text-stroke:0.6px #245a12">NF</div>
<div class="t " style="left:777px;top:204.54px;font-size:12px;color:#555;font-weight:400;text-decoration:underline">PV 1 #1 Cliente A</div>
<div class="t " style="left:977px;top:204.54px;font-size:12px;color:#333;font-weight:400;letter-spacing:-0.15px">Fábrica de móveis...</div>
<div class="t " style="left:1097px;top:204.54px;font-size:12px;color:#333;font-weight:400;letter-spacing:0.42px">11/10/2023 14:15:24</div>
<div class="t " style="left:1257px;top:204.54px;font-size:12px;color:#333;font-weight:400;">Fábrica</div>
<div class="r" style="left:0px;top:221px;width:1329px;height:21px;background:#f0f1f3"></div>
<div class="t" style="right:1267px;top:225.54px;font-size:12px;color:#333;letter-spacing:0.25px">3.817,19</div>
<div class="t " style="left:77px;top:225.54px;font-size:12px;color:#333;font-weight:400;">NF. N. 1/1 Cliente A</div>
<div class="t" style="left:530px;top:221.90px;font-size:17px;line-height:17px;font-weight:700;color:#245a12;letter-spacing:-0.5px;transform:scaleX(1.05);transform-origin:left;-webkit-text-stroke:0.6px #245a12">NF</div>
<div class="t " style="left:777px;top:225.54px;font-size:12px;color:#555;font-weight:400;text-decoration:underline">PV 1 #1 Cliente A</div>
<div class="t " style="left:977px;top:225.54px;font-size:12px;color:#333;font-weight:400;letter-spacing:-0.15px">Fábrica de móveis...</div>
<div class="t " style="left:1097px;top:225.54px;font-size:12px;color:#333;font-weight:400;letter-spacing:0.42px">11/10/2023 14:15:24</div>
<div class="t " style="left:1257px;top:225.54px;font-size:12px;color:#333;font-weight:400;">Fábrica</div>
<div class="r" style="left:0px;top:242px;width:1329px;height:22px;background:#fff"></div>
<div class="t " style="left:77px;top:247.04px;font-size:12px;color:#333;font-weight:400;">NF. N. 1235/1 Fornecedor A</div>
<div class="t" style="left:530px;top:243.40px;font-size:17px;line-height:17px;font-weight:700;color:#245a12;letter-spacing:-0.5px;transform:scaleX(1.05);transform-origin:left;-webkit-text-stroke:0.6px #245a12">NF</div>
<div class="t " style="left:977px;top:247.04px;font-size:12px;color:#333;font-weight:400;letter-spacing:-0.15px">Fábrica de móveis...</div>
<div class="t " style="left:1097px;top:247.04px;font-size:12px;color:#333;font-weight:400;letter-spacing:0.42px">11/10/2023 14:15:24</div>
<div class="t " style="left:1257px;top:247.04px;font-size:12px;color:#333;font-weight:400;">Fábrica</div>
<div class="r" style="left:0px;top:264px;width:1329px;height:21px;background:#f0f1f3"></div>
<div class="t" style="right:1267px;top:268.54px;font-size:12px;color:#333;letter-spacing:0.25px">3.817,19</div>
<div class="t " style="left:77px;top:268.54px;font-size:12px;color:#333;font-weight:400;">NF. N. 1235/1 Fornecedor A</div>
<div class="t" style="left:530px;top:264.90px;font-size:17px;line-height:17px;font-weight:700;color:#245a12;letter-spacing:-0.5px;transform:scaleX(1.05);transform-origin:left;-webkit-text-stroke:0.6px #245a12">NF</div>
<div class="t " style="left:977px;top:268.54px;font-size:12px;color:#333;font-weight:400;letter-spacing:-0.15px">Fábrica de móveis...</div>
<div class="t " style="left:1097px;top:268.54px;font-size:12px;color:#333;font-weight:400;letter-spacing:0.42px">11/10/2023 14:15:24</div>
<div class="t " style="left:1257px;top:268.54px;font-size:12px;color:#333;font-weight:400;">Fábrica</div>
<div class="r" style="left:0px;top:285px;width:1329px;height:21px;background:#fff"></div>
<div class="t " style="left:77px;top:289.54px;font-size:12px;color:#333;font-weight:400;">NF. N. 2/1 Cliente A</div>
<div class="t" style="left:530px;top:285.90px;font-size:17px;line-height:17px;font-weight:700;color:#245a12;letter-spacing:-0.5px;transform:scaleX(1.05);transform-origin:left;-webkit-text-stroke:0.6px #245a12">NF</div>
<div class="t " style="left:777px;top:289.54px;font-size:12px;color:#555;font-weight:400;text-decoration:underline">PV 2 #1 Cliente A</div>
<div class="t " style="left:977px;top:289.54px;font-size:12px;color:#333;font-weight:400;letter-spacing:-0.15px">Fábrica de móveis...</div>
<div class="t " style="left:1097px;top:289.54px;font-size:12px;color:#333;font-weight:400;letter-spacing:0.42px">11/10/2023 14:15:24</div>
<div class="t " style="left:1257px;top:289.54px;font-size:12px;color:#333;font-weight:400;">Fábrica</div>
<div class="r" style="left:0px;top:306px;width:1329px;height:21px;background:#f0f1f3"></div>
<div class="t" style="right:1267px;top:310.54px;font-size:12px;color:#333;letter-spacing:0.25px">4.216,59</div>
<div class="t " style="left:77px;top:310.54px;font-size:12px;color:#333;font-weight:400;">NF. N. 2/1 Cliente A</div>
<div class="t" style="left:530px;top:306.90px;font-size:17px;line-height:17px;font-weight:700;color:#245a12;letter-spacing:-0.5px;transform:scaleX(1.05);transform-origin:left;-webkit-text-stroke:0.6px #245a12">NF</div>
<div class="t " style="left:777px;top:310.54px;font-size:12px;color:#555;font-weight:400;text-decoration:underline">PV 2 #1 Cliente A</div>
<div class="t " style="left:977px;top:310.54px;font-size:12px;color:#333;font-weight:400;letter-spacing:-0.15px">Fábrica de móveis...</div>
<div class="t " style="left:1097px;top:310.54px;font-size:12px;color:#333;font-weight:400;letter-spacing:0.42px">11/10/2023 14:15:24</div>
<div class="t " style="left:1257px;top:310.54px;font-size:12px;color:#333;font-weight:400;">Fábrica</div>
<div class="r" style="left:0px;top:327px;width:1329px;height:22px;background:#fff"></div>
<div class="t " style="left:77px;top:332.04px;font-size:12px;color:#333;font-weight:400;">NF. N. 1236/1 Fornecedor A</div>
<div class="t" style="left:530px;top:328.40px;font-size:17px;line-height:17px;font-weight:700;color:#245a12;letter-spacing:-0.5px;transform:scaleX(1.05);transform-origin:left;-webkit-text-stroke:0.6px #245a12">NF</div>
<div class="t " style="left:977px;top:332.04px;font-size:12px;color:#333;font-weight:400;letter-spacing:-0.15px">Fábrica de móveis...</div>
<div class="t " style="left:1097px;top:332.04px;font-size:12px;color:#333;font-weight:400;letter-spacing:0.42px">11/10/2023 14:15:24</div>
<div class="t " style="left:1257px;top:332.04px;font-size:12px;color:#333;font-weight:400;">Fábrica</div>
<div class="r" style="left:0px;top:349px;width:1329px;height:21px;background:#f0f1f3"></div>
<div class="t" style="right:1267px;top:353.54px;font-size:12px;color:#333;letter-spacing:0.25px">3.817,19</div>
<div class="t " style="left:77px;top:353.54px;font-size:12px;color:#333;font-weight:400;">NF. N. 1236/1 Fornecedor A</div>
<div class="t" style="left:530px;top:349.90px;font-size:17px;line-height:17px;font-weight:700;color:#245a12;letter-spacing:-0.5px;transform:scaleX(1.05);transform-origin:left;-webkit-text-stroke:0.6px #245a12">NF</div>
<div class="t " style="left:977px;top:353.54px;font-size:12px;color:#333;font-weight:400;letter-spacing:-0.15px">Fábrica de móveis...</div>
<div class="t " style="left:1097px;top:353.54px;font-size:12px;color:#333;font-weight:400;letter-spacing:0.42px">11/10/2023 14:15:24</div>
<div class="t " style="left:1257px;top:353.54px;font-size:12px;color:#333;font-weight:400;">Fábrica</div>
<div class="r" style="left:69px;top:0px;width:1px;height:370px;background:#d5d8dc"></div>
<div class="r" style="left:569px;top:0px;width:1px;height:370px;background:#d5d8dc"></div>
<div class="r" style="left:769px;top:0px;width:1px;height:370px;background:#d5d8dc"></div>
<div class="r" style="left:969px;top:0px;width:1px;height:370px;background:#d5d8dc"></div>
<div class="r" style="left:1089px;top:0px;width:1px;height:370px;background:#d5d8dc"></div>
<div class="r" style="left:1249px;top:0px;width:1px;height:370px;background:#d5d8dc"></div>
</div>
<div class="r" style="left:1336px;top:274px;width:16px;height:370px;background:#f0f0f0"></div>
<svg class="r" style="left:1341px;top:279px" width="8" height="6" viewBox="0 0 8 6"><path d="M1 5L4 1.5 7 5" stroke="#505050" stroke-width="1.3" fill="none"/></svg>
<div class="r" style="left:1337px;top:516px;width:13px;height:110px;background:#c1c1c1"></div>
<svg class="r" style="left:1341px;top:631px" width="7" height="5" viewBox="0 0 7 5"><path d="M0 0h7L3.5 5z" fill="#606060"/></svg>
<div class="r" style="left:6px;top:644px;width:1330px;height:17px;background:#f0f0f0"></div>
<svg class="r" style="left:11px;top:649px" width="5" height="7" viewBox="0 0 5 7"><path d="M5 0v7L0 3.5z" fill="#505050"/></svg>
<div class="r" style="left:467px;top:646px;width:851px;height:13px;background:#c1c1c1"></div>
<svg class="r" style="left:1322px;top:649px" width="5" height="7" viewBox="0 0 5 7"><path d="M0 0v7L5 3.5z" fill="#a0a0a0"/></svg>
<div class="r" style="left:1336px;top:644px;width:16px;height:17px;background:#dcdcdc"></div>
<div class="r" style="left:6px;top:661px;width:1346px;height:1px;background:#9ea3a9"></div>
<div class="r" style="left:6px;top:662px;width:1330px;height:21px;background:#c2c2c2"></div>
<div class="r" style="left:1336px;top:662px;width:16px;height:21px;background:#f2f2f2"></div>
<div class="r" style="left:75px;top:662px;width:1px;height:21px;background:#dadada"></div>
<div class="r" style="left:575px;top:662px;width:1px;height:21px;background:#dadada"></div>
<div class="r" style="left:775px;top:662px;width:1px;height:21px;background:#dadada"></div>
<div class="r" style="left:975px;top:662px;width:1px;height:21px;background:#dadada"></div>
<div class="r" style="left:1095px;top:662px;width:1px;height:21px;background:#dadada"></div>
<div class="r" style="left:1255px;top:662px;width:1px;height:21px;background:#dadada"></div>
<div class="t " style="right:1290px;top:665.84px;font-size:12px;color:#333;font-weight:400;letter-spacing:0.2px">784.878,91</div>
<div class="r" style="left:83px;top:674px;width:487px;height:1px;background:repeating-linear-gradient(90deg,#95a0ad 0 1px,transparent 1px 7px)"></div>
<div class="r" style="left:583px;top:674px;width:187px;height:1px;background:repeating-linear-gradient(90deg,#95a0ad 0 1px,transparent 1px 7px)"></div>
<div class="r" style="left:783px;top:674px;width:187px;height:1px;background:repeating-linear-gradient(90deg,#95a0ad 0 1px,transparent 1px 7px)"></div>
<div class="r" style="left:983px;top:674px;width:107px;height:1px;background:repeating-linear-gradient(90deg,#95a0ad 0 1px,transparent 1px 7px)"></div>
<div class="r" style="left:1103px;top:674px;width:147px;height:1px;background:repeating-linear-gradient(90deg,#95a0ad 0 1px,transparent 1px 7px)"></div>
<div class="r" style="left:1263px;top:674px;width:67px;height:1px;background:repeating-linear-gradient(90deg,#95a0ad 0 1px,transparent 1px 7px)"></div>
<div class="r" style="left:6px;top:683px;width:1346px;height:1.5px;background:#a4aab2"></div>
<div class="r" style="left:1245px;top:239px;width:99px;height:413px;border:3.3px solid #fe0000;box-sizing:border-box"></div>
<div class="r" style="left:1356px;top:46px;width:2px;height:643px;background:#5d89b3"></div>
<div class="r" style="left:0px;top:687px;width:1358px;height:2px;background:#5d89b3;border-top:0.6px solid #56708a;box-sizing:border-box"></div>
</body></html>
